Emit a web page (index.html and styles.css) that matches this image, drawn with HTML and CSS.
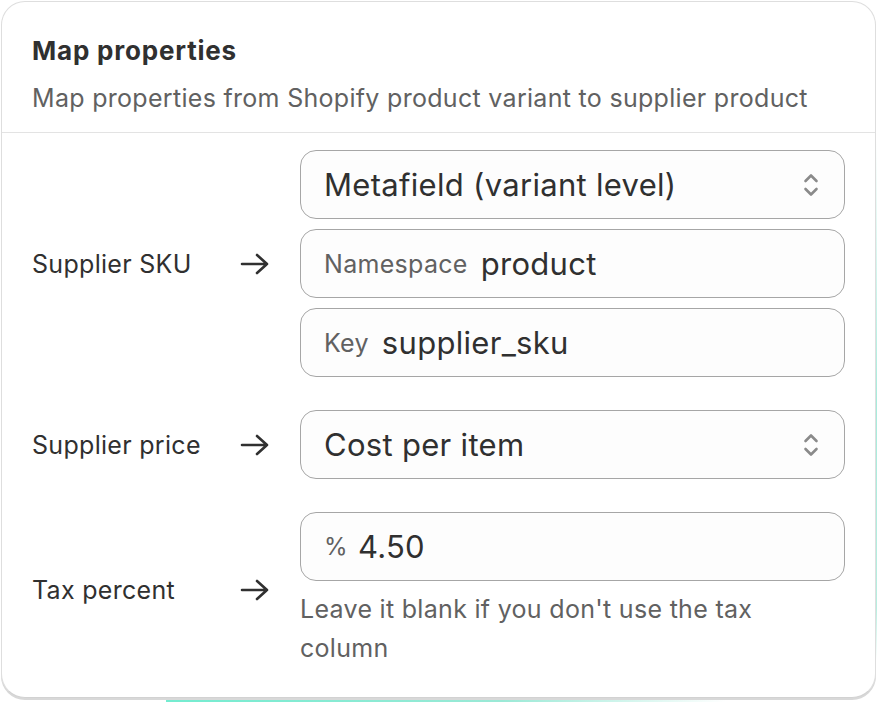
FILE: index.html
```html
<!DOCTYPE html>
<html lang="en">
<head>
<meta charset="utf-8">
<title>Map properties</title>
<link rel="stylesheet" href="styles.css">
</head>
<body>
<div class="glow glow-bottom"></div>
<div class="glow glow-right"></div>
<div class="card">
  <div class="card-header">
    <h2 class="title">Map properties</h2>
    <p class="subtitle">Map properties from Shopify product variant to supplier product</p>
  </div>
  <div class="card-body">
    <div class="row">
      <div class="label">Supplier SKU</div>
      <div class="arrow"><svg viewBox="0 0 30 24" width="30" height="24"><path d="M2 12H27M17 3l10 9-10 9" fill="none" stroke="#303030" stroke-width="2.6" stroke-linecap="round" stroke-linejoin="round"/></svg></div>
      <div class="fields">
        <div class="field select">
          <span class="value">Metafield (variant level)</span>
          <svg class="chev" viewBox="0 0 20 30" width="20" height="30"><path d="M4.5 11l5.5-5.5 5.5 5.5M4.5 19l5.5 5.5 5.5-5.5" fill="none" stroke="#8a8a8a" stroke-width="2.6" stroke-linecap="round" stroke-linejoin="round"/></svg>
        </div>
        <div class="field">
          <span class="prefix">Namespace</span><span class="value">product</span>
        </div>
        <div class="field">
          <span class="prefix">Key</span><span class="value">supplier_sku</span>
        </div>
      </div>
    </div>
    <div class="row">
      <div class="label">Supplier price</div>
      <div class="arrow"><svg viewBox="0 0 30 24" width="30" height="24"><path d="M2 12H27M17 3l10 9-10 9" fill="none" stroke="#303030" stroke-width="2.6" stroke-linecap="round" stroke-linejoin="round"/></svg></div>
      <div class="fields">
        <div class="field select">
          <span class="value">Cost per item</span>
          <svg class="chev" viewBox="0 0 20 30" width="20" height="30"><path d="M4.5 11l5.5-5.5 5.5 5.5M4.5 19l5.5 5.5 5.5-5.5" fill="none" stroke="#8a8a8a" stroke-width="2.6" stroke-linecap="round" stroke-linejoin="round"/></svg>
        </div>
      </div>
    </div>
    <div class="row">
      <div class="label">Tax percent</div>
      <div class="arrow"><svg viewBox="0 0 30 24" width="30" height="24"><path d="M2 12H27M17 3l10 9-10 9" fill="none" stroke="#303030" stroke-width="2.6" stroke-linecap="round" stroke-linejoin="round"/></svg></div>
      <div class="fields">
        <div class="field">
          <span class="prefix pct">%</span><span class="value">4.50</span>
        </div>
        <p class="help">Leave it blank if you don't use the tax column</p>
      </div>
    </div>
  </div>
</div>
</body>
</html>
```

FILE: styles.css
```css
html, body {
  margin: 0;
  padding: 0;
  background: #ffffff;
}
body {
  position: relative;
  width: 877px;
  height: 702px;
  overflow: hidden;
  font-family: Inter, "Noto Sans", sans-serif;
  color: #303030;
}
.glow {
  position: absolute;
}
.glow-bottom {
  left: 166px;
  width: 560px;
  bottom: 0;
  height: 8px;
  background: linear-gradient(90deg, #74ecd0 0%, #9be9d6 60%, rgba(200,235,225,0) 100%);
}
.glow-right {
  right: 0;
  top: 140px;
  width: 6px;
  height: 520px;
  background: linear-gradient(180deg, rgba(160,235,215,0) 0%, #a7ecdc 50%, #b8eee0 90%, rgba(200,240,230,0) 100%);
}
.card {
  position: relative;
  box-sizing: border-box;
  margin: 1px 0 0 1px;
  width: 875px;
  height: 697px;
  background: #ffffff;
  border: 1.5px solid #dedede;
  border-bottom-color: #d2d2d2;
  border-radius: 24px;
  box-shadow: 0 2px 0 #d8d8d8;
}
.card-header {
  padding: 33px 30px 0 30px;
  height: 131px;
  box-sizing: border-box;
  border-bottom: 1.5px solid #e3e3e3;
}
.title {
  margin: 0;
  font-size: 26px;
  line-height: 32px;
  font-weight: 700;
  letter-spacing: 0.8px;
  color: #303030;
}
.subtitle {
  margin: 15px 0 0 0;
  font-size: 25px;
  line-height: 32px;
  letter-spacing: 0.3px;
  color: #616161;
  white-space: nowrap;
}
.card-body {
  padding: 17px 29px 0 30px;
  display: flex;
  flex-direction: column;
  gap: 33px;
}
.row {
  display: grid;
  grid-template-columns: 178px 30px 545px;
  column-gap: 30px;
  align-items: center;
}
.label {
  font-size: 25px;
  letter-spacing: 0.3px;
  color: #303030;
  white-space: nowrap;
}
.arrow {
  display: flex;
  align-items: center;
}
.arrow svg {
  display: block;
}
.fields {
  display: flex;
  flex-direction: column;
  gap: 10px;
}
.field {
  box-sizing: border-box;
  height: 69px;
  border: 1.5px solid #a6a6a6;
  border-radius: 16px;
  background: #fdfdfd;
  display: flex;
  align-items: center;
  padding: 0 23px 0 23px;
}
.select {
  justify-content: space-between;
}
.value {
  font-size: 31px;
  letter-spacing: 0.3px;
  color: #303030;
  white-space: nowrap;
}
.prefix {
  font-size: 25px;
  letter-spacing: 0.3px;
  color: #616161;
  margin-right: 13px;
}
.pct {
  font-size: 24px;
  margin-right: 10px;
}
.chev {
  display: block;
}
.help {
  margin: -1px 0 0 0;
  font-size: 25px;
  line-height: 39px;
  letter-spacing: 0.3px;
  color: #616161;
  width: 470px;
}
```
